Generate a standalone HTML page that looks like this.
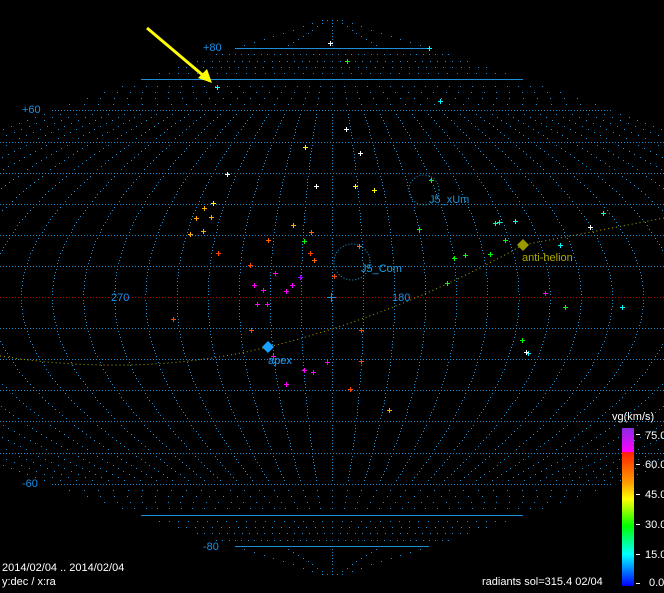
<!DOCTYPE html>
<html><head><meta charset="utf-8"><style>
html,body{margin:0;padding:0;background:#000;width:664px;height:593px;overflow:hidden}
svg{display:block}
text{font-family:"Liberation Sans",sans-serif;font-size:11px}
</style></head><body>
<svg id="s" width="664" height="593" xmlns="http://www.w3.org/2000/svg">
<defs><linearGradient id="g" x1="0" y1="0" x2="0" y2="1">
<stop offset="0" stop-color="#8a2be2"/><stop offset="0.15" stop-color="#ff00ff"/><stop offset="0.155" stop-color="#ff2000"/>
<stop offset="0.35" stop-color="#ffa000"/><stop offset="0.45" stop-color="#ffff00"/><stop offset="0.62" stop-color="#00ff00"/>
<stop offset="0.8" stop-color="#00ffff"/><stop offset="1" stop-color="#0000ff"/></linearGradient></defs>
<g id="grid"></g>
<g id="pts"></g>
<circle cx="352" cy="262" r="18" fill="none" stroke="#1aa0e8" stroke-dasharray="1 2"/>
<circle cx="424" cy="190" r="15" fill="none" stroke="#1a90d0" stroke-dasharray="1 2"/>
<path d="M0,356 Q140,378 268,347 T523,245 L664,218" fill="none" stroke="#aaaa00" stroke-dasharray="1 3"/>
<polygon points="268,341 274,347 268,353 262,347" fill="#1aa0ff"/>
<polygon points="523,239 529,245 523,251 517,245" fill="#999900"/>
<text x="268" y="364" fill="#1aa0ff">apex</text>
<text x="522" y="261" fill="#aaaa00">anti-helion</text>
<text x="361" y="272" fill="#1aa0e8">J5_Com</text>
<text x="429" y="203" fill="#1a90d0">J5_xUm</text>
<text x="203" y="51" fill="#1a90e8">+80</text>
<text x="22" y="113" fill="#1a90e8">+60</text>
<text x="22" y="487" fill="#1a90e8">-60</text>
<text x="203" y="550" fill="#1a90e8">-80</text>
<text x="111" y="301" fill="#1a90e8">270</text>
<text x="392" y="301" fill="#1a90e8">180</text>
<path d="M327,297.5h9M331.5,293v9" stroke="#1a90e8"/>
<line x1="147" y1="28" x2="205" y2="77" stroke="#ffff00" stroke-width="3"/>
<polygon points="212,83 198,78 207,69" fill="#ffff00"/>
<text x="612" y="420" fill="#fff">vg(km/s)</text>
<rect x="622" y="428" width="12" height="158" fill="url(#g)"/>
<g fill="#fff"><text x="645" y="439">75.0</text><text x="645" y="468">60.0</text><text x="645" y="498">45.0</text><text x="645" y="528">30.0</text><text x="645" y="558">15.0</text><text x="649" y="586">0.0</text></g>
<g stroke="#fff"><path d="M636,434.5h4M636,464.5h4M636,494.5h4M636,524.5h4M636,554.5h4M636,583.5h4"/></g>
<text x="2" y="571" fill="#fff">2014/02/04 .. 2014/02/04</text>
<text x="2" y="585" fill="#fff">y:dec / x:ra</text>
<text x="482" y="585" fill="#fff">radiants sol=315.4 02/04</text>
</svg>
<script>
var g=document.getElementById('grid'),K=3.11,cx=332,cy=297;
var dots='';
for(var k=-18;k<=18;k++){for(var d=-89;d<=89;d+=1){if(Math.abs(d)>80&&k%9!=0)continue;if(Math.abs(d)>60&&Math.abs(d)<=80&&d%2!=0)continue;var x=Math.round(cx+k*10*Math.cos(d*Math.PI/180)*K),y=Math.round(cy-d*K);if(x>=0&&x<664&&d%10!=0)dots+='M'+x+','+y+'h1v1h-1z';}}
var ld='',red='',sol='';
for(var d=-80;d<=80;d+=10){var hw=180*Math.cos(d*Math.PI/180)*K,y=Math.round(cy-d*K);var a=Math.max(0,Math.round(cx-hw)),b=Math.min(664,Math.round(cx+hw));
 if(Math.abs(d)>=70){sol+='M'+a+','+(y+0.5)+'H'+b;}
 else for(var x=a;x<b;x+=3){var p='M'+x+','+y+'h1v1h-1z';if(d==0)red+=p;else ld+=p;}}
g.innerHTML='<path d="'+dots+ld+'" fill="#1a90d8"/><path d="'+red+'" fill="#c00000"/><path d="'+sol+'" stroke="#1a90d8" fill="none"/>';
var P=[[330,43,'#fff'],[347,61,'#0f0'],[429,48,'#0ff'],[217,87,'#0ff'],[440,101,'#0ff'],[346,129,'#fff'],[305,147,'#ff0'],[360,153,'#fff'],[227,174,'#fff'],[316,186,'#fff'],[355,186,'#ff0'],[374,190,'#ff0'],[431,180,'#0f0'],[213,203,'#ff0'],[204,208,'#fa0'],[196,218,'#fa0'],[211,217,'#fa0'],[190,234,'#fa0'],[203,231,'#fa0'],[293,225,'#fa0'],[311,232,'#f60'],[304,241,'#0f0'],[268,240,'#f60'],[218,253,'#f40'],[250,265,'#f40'],[310,253,'#f40'],[314,260,'#f60'],[359,246,'#f60'],[419,229,'#0f0'],[495,223,'#0fa'],[499,222,'#0fa'],[515,221,'#0ff'],[505,240,'#0f0'],[454,258,'#0f0'],[465,255,'#0f0'],[490,254,'#0f0'],[447,283,'#0f0'],[560,245,'#0ff'],[590,227,'#fff'],[603,213,'#0fa'],[275,273,'#f0f'],[300,277,'#90f'],[292,285,'#f0f'],[286,291,'#f0f'],[254,285,'#f0f'],[263,290,'#f0f'],[257,304,'#f0f'],[267,304,'#f0f'],[334,276,'#f40'],[545,293,'#f0f'],[565,307,'#0f0'],[622,307,'#0ff'],[173,319,'#f40'],[251,330,'#f40'],[361,330,'#f40'],[522,340,'#0f0'],[528,353,'#0ff'],[526,352,'#fff'],[327,362,'#f0f'],[361,361,'#f40'],[304,370,'#f0f'],[313,372,'#f0f'],[286,384,'#f0f'],[350,389,'#f40'],[389,410,'#fa0'],[273,356,'#f0f']];
var ph='';P.forEach(function(q){ph+='<rect x="'+(q[0]-2)+'" y="'+q[1]+'" width="5" height="1" fill="'+q[2]+'"/><rect x="'+q[0]+'" y="'+(q[1]-2)+'" width="1" height="5" fill="'+q[2]+'"/>';});
document.getElementById('pts').innerHTML=ph;
</script>
</body></html>
